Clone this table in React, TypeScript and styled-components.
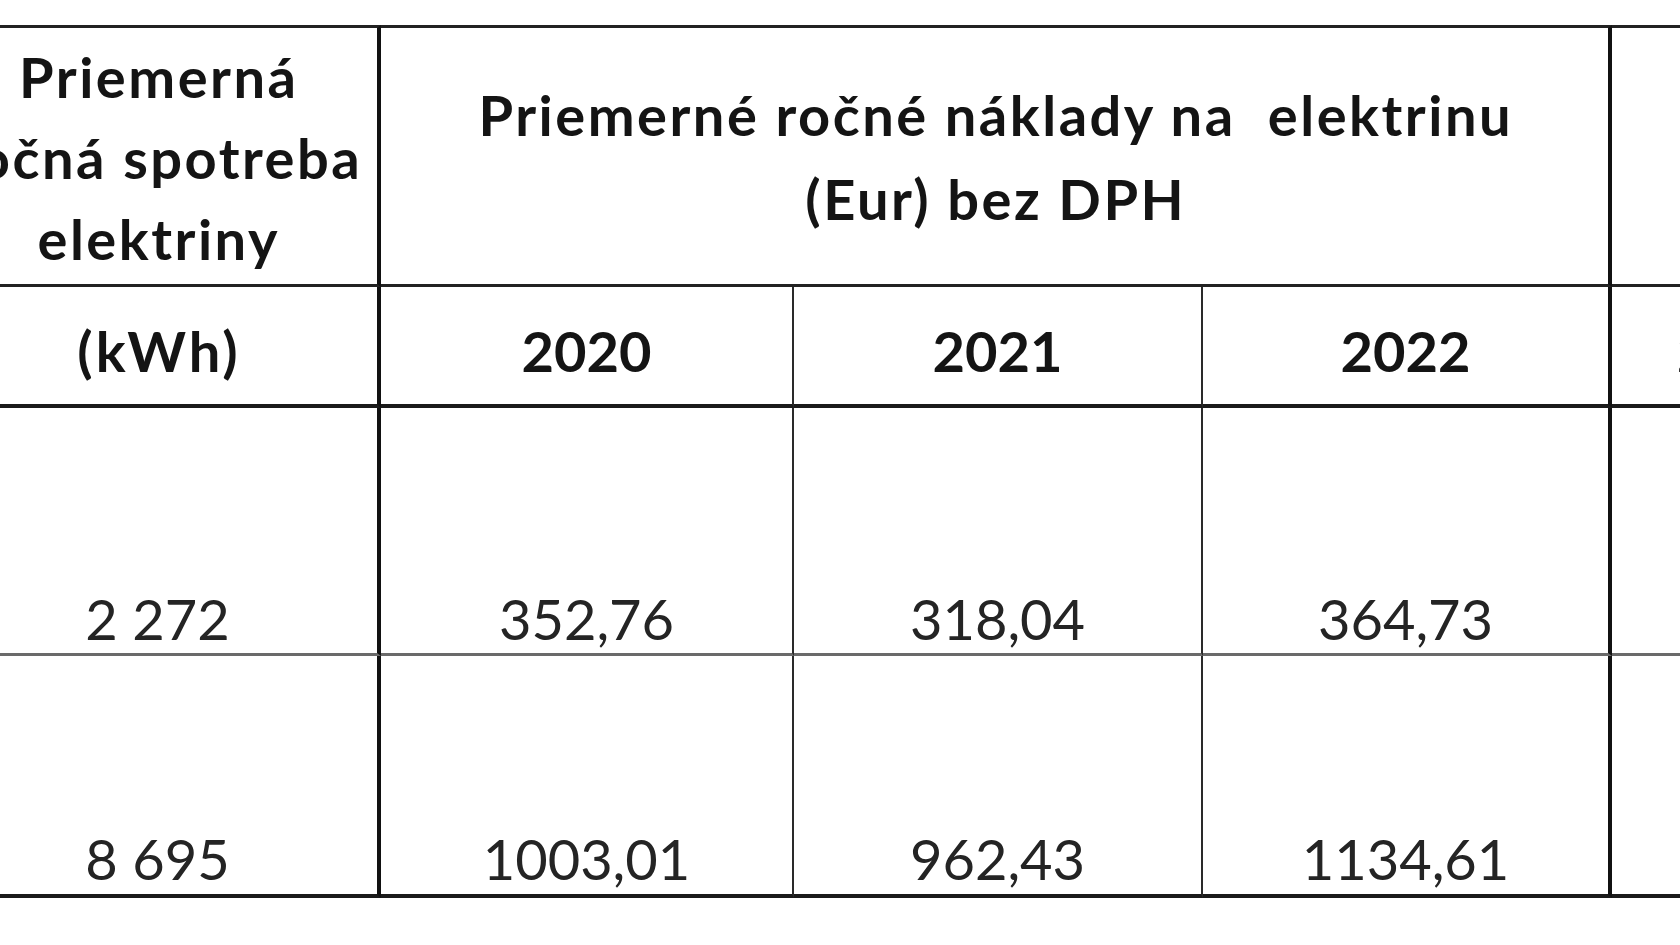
import styled, { createGlobalStyle } from 'styled-components';

const GlobalStyle = createGlobalStyle`
  html, body {
    margin: 0;
    padding: 0;
    background: #fff;
    overflow: hidden;
  }
`;

const Page = styled.div`
  width: 1680px;
  height: 945px;
  overflow: hidden;
  background: #fff;
  padding-top: 25px;
  box-sizing: border-box;
`;

const Table = styled.table`
  margin-left: -62px;
  border-collapse: separate;
  border-spacing: 0;
  table-layout: fixed;
  width: 1934px;
  font-family: Lato, 'Open Sans', sans-serif;
  font-size: 56px;
  color: #141414;
`;

const Col = styled.col<{ $w: number }>`
  width: ${(p) => p.$w}px;
`;

type Edge = 'thick' | 'thin' | 'none';

const Cell = styled.td<{ $right?: Edge }>`
  box-sizing: border-box;
  padding: 0;
  text-align: center;
  white-space: nowrap;
  border-right: ${(p) =>
    p.$right === 'thick' ? '4px solid #111' : p.$right === 'thin' ? '2px solid #2a2a2a' : 'none'};
`;

const TitleCell = styled(Cell)`
  height: 262px;
  border-top: 3px solid #222;
  border-bottom: 3px solid #222;
  font-weight: 700;
  vertical-align: middle;
`;

const TitleText = styled.div<{ $lh: number }>`
  line-height: ${(p) => p.$lh}px;
  padding-top: 2px;
  padding-left: 2.5px;
  letter-spacing: 2.5px;
`;

const YearCell = styled(Cell)<{ $spaced?: boolean }>`
  height: 121px;
  border-bottom: 4px solid #1a1a1a;
  font-weight: 700;
  vertical-align: middle;
  padding-top: 10px;
  letter-spacing: ${(p) => (p.$spaced ? '3px' : '0')};
  padding-left: ${(p) => (p.$spaced ? '3px' : '0')};
`;

const ValueCell = styled(Cell)<{ $last?: boolean }>`
  height: ${(p) => (p.$last ? 242 : 248)}px;
  border-bottom: ${(p) => (p.$last ? '4px solid #1a1a1a' : '3px solid #6a6a6a')};
  vertical-align: bottom;
  padding-bottom: ${(p) => (p.$last ? 2 : 1)}px;
  font-weight: 400;
  color: #242424;
`;

const rows = [
  { kwh: '2 272', values: ['352,76', '318,04', '364,73'] },
  { kwh: '8 695', values: ['1003,01', '962,43', '1134,61'] },
];

const App = () => {
  return (
    <Page>
      <GlobalStyle />
      <Table>
        <colgroup>
          <Col $w={443} />
          <Col $w={413} />
          <Col $w={409} />
          <Col $w={409} />
          <Col $w={260} />
        </colgroup>
        <tbody>
          <tr>
            <TitleCell $right="thick">
              <TitleText $lh={81}>
                Priemerná
                <br />
                ročná spotreba
                <br />
                elektriny
              </TitleText>
            </TitleCell>
            <TitleCell colSpan={3} $right="thick">
              <TitleText $lh={84}>
                Priemerné ročné náklady na{'\u00a0'} elektrinu
                <br />
                (Eur) bez DPH
              </TitleText>
            </TitleCell>
            <TitleCell />
          </tr>
          <tr>
            <YearCell $right="thick" $spaced>
              (kWh)
            </YearCell>
            <YearCell $right="thin">2020</YearCell>
            <YearCell $right="thin">2021</YearCell>
            <YearCell $right="thick">2022</YearCell>
            <YearCell>2023</YearCell>
          </tr>
          {rows.map((r, i) => (
            <tr key={r.kwh}>
              <ValueCell $right="thick" $last={i === rows.length - 1}>
                {r.kwh}
              </ValueCell>
              {r.values.map((v, j) => (
                <ValueCell
                  key={v}
                  $right={j === 2 ? 'thick' : 'thin'}
                  $last={i === rows.length - 1}
                >
                  {v}
                </ValueCell>
              ))}
              <ValueCell $last={i === rows.length - 1} />
            </tr>
          ))}
        </tbody>
      </Table>
    </Page>
  );
};

export default App;
